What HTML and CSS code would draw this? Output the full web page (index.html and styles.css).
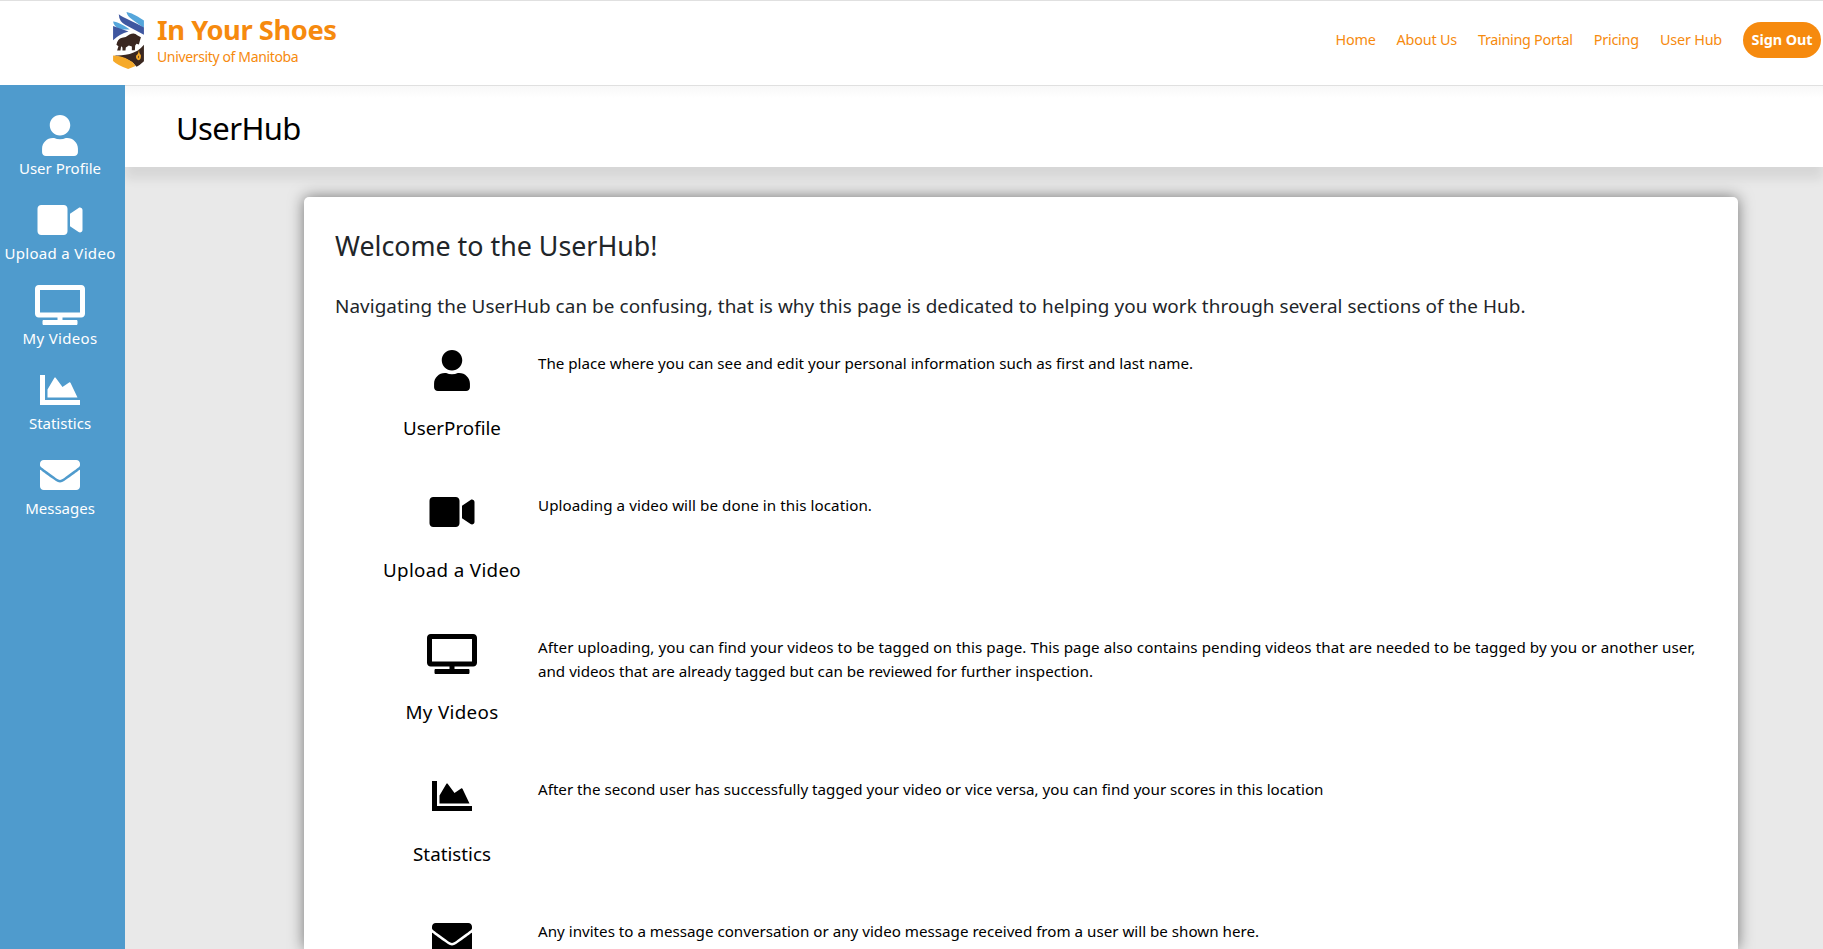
FILE: index.html
```html
<!DOCTYPE html>
<html lang="en">
<head>
<meta charset="utf-8">
<title>UserHub</title>
<link rel="stylesheet" href="styles.css">
</head>
<body>
<svg class="sprite" width="0" height="0">
  <symbol id="user" viewBox="0 0 448 512"><path d="M224 256c70.7 0 128-57.3 128-128S294.7 0 224 0 96 57.3 96 128s57.3 128 128 128zm89.6 32h-16.7c-22.2 10.2-46.9 16-72.9 16s-50.6-5.8-72.9-16h-16.7C60.2 288 0 348.2 0 422.4V464c0 26.5 21.5 48 48 48h352c26.5 0 48-21.5 48-48v-41.6c0-74.2-60.2-134.4-134.4-134.4z"/></symbol>
  <symbol id="video" viewBox="0 0 576 512"><path d="M336.2 64H47.8C21.4 64 0 85.4 0 111.8v288.4C0 426.6 21.4 448 47.8 448h288.4c26.4 0 47.8-21.4 47.8-47.8V111.8c0-26.4-21.4-47.8-47.8-47.8zm189.4 37.7L416 177.3v157.4l109.6 75.5c21.2 14.6 50.4-.3 50.4-25.8V127.5c0-25.4-29.1-40.4-50.4-25.8z"/></symbol>
  <symbol id="tv" viewBox="0 0 640 512"><path d="M592 0H48C21.5 0 0 21.5 0 48v320c0 26.5 21.5 48 48 48h240v32H112c-8.8 0-16 7.2-16 16v32c0 8.8 7.2 16 16 16h416c8.8 0 16-7.2 16-16v-32c0-8.8-7.2-16-16-16H352v-32h240c26.5 0 48-21.5 48-48V48c0-26.5-21.5-48-48-48zm-16 352H64V64h512v288z"/></symbol>
  <symbol id="chart" viewBox="0 0 512 512"><path d="M512 384v64H0V64h64v320h448zM372.7 159.5L288 216l-85.3-113.7c-5.1-6.8-15.5-6.3-19.9 1L96 248v104h384l-89.9-187.8c-3.2-6.5-11.4-8.7-17.4-4.7z"/></symbol>
  <symbol id="mail" viewBox="0 0 512 512"><path d="M502.3 190.8c3.9-3.1 9.7-.2 9.7 4.7V400c0 26.5-21.5 48-48 48H48c-26.5 0-48-21.5-48-48V195.6c0-5 5.7-7.8 9.7-4.7 22.4 17.4 52.1 39.5 154.1 113.6 21.1 15.4 56.7 47.8 92.2 47.6 35.7.3 72-32.8 92.3-47.6 102-74.1 131.6-96.3 154-113.7zM256 320c23.2.4 56.6-29.2 73.4-41.4 132.7-96.3 142.8-104.7 173.4-128.7 5.8-4.5 9.2-11.5 9.2-18.9v-19c0-26.5-21.5-48-48-48H48c-26.5 0-48 21.5-48 48v19c0 7.4 3.4 14.3 9.2 18.9 30.6 23.9 40.7 32.4 173.4 128.7 16.8 12.2 50.2 41.8 73.4 41.4z"/></symbol>
</svg>

<header class="topbar">
  <a class="brand">
    <svg class="logo" viewBox="0 0 92 170">
      <path fill="#55a6db" d="M40 0C55 3 65 8 92 25V48L57 22Q42 13 40 0ZM0 28C14 30 30 37 50 52L24 52Q2 45 0 28Z"/>
      <path fill="#3f57a0" d="M17 7C30 18 70 33 92 46V68L36 38Q18 29 17 7ZM0 42L46 58Q18 66 0 84Z"/>
      <path fill="#3a2720" d="M10 98Q13 80 27 77Q40 75 49 67Q64 61 72 69L83 75L80 86L77 97L70 95L66 100L65 114H56V103L47 100L38 106L37 115H28V106L24 102L22 115H12L16 102Z"/>
      <path fill="#3a2720" d="M3 130C30 130 70 128 92 98V147Q80 159 70 163Q52 139 3 130Z"/>
      <path fill="#f6aa2a" d="M0 130Q48 132 67 161L45 170Q12 158 0 146ZM77 111Q77 124 83 129Q84 143 76 144Q66 140 69 130Q77 124 77 111Z"/>
      <path fill="#3a2720" d="M75 139Q72 135 77 129Q78 137 75 139Z"/>
    </svg>
    <span class="brand-text">
      <span class="brand-name">In Your Shoes</span>
      <span class="brand-sub">University of Manitoba</span>
    </span>
  </a>
  <nav class="nav">
    <a>Home</a><a>About Us</a><a class="tight">Training Portal</a><a>Pricing</a><a>User Hub</a>
    <a class="signout">Sign Out</a>
  </nav>
</header>

<div class="shell">
  <aside class="sidebar">
    <a class="side-item"><svg class="icon w-user"><use href="#user"/></svg><span>User Profile</span></a>
    <a class="side-item"><svg class="icon w-video"><use href="#video"/></svg><span class="wide">Upload a Video</span></a>
    <a class="side-item"><svg class="icon w-tv"><use href="#tv"/></svg><span class="wide">My Videos</span></a>
    <a class="side-item"><svg class="icon w-sq"><use href="#chart"/></svg><span>Statistics</span></a>
    <a class="side-item"><svg class="icon w-sq"><use href="#mail"/></svg><span>Messages</span></a>
  </aside>
  <main class="main">
    <div class="titlebar"><h1>UserHub</h1></div>
    <section class="card">
      <h2>Welcome to the UserHub!</h2>
      <p class="lead">Navigating the UserHub can be confusing, that is why this page is dedicated to helping you work through several sections of the Hub.</p>
      <div class="row">
        <div class="topic"><svg class="icon w-user"><use href="#user"/></svg><span>UserProfile</span></div>
        <p class="desc">The place where you can see and edit your personal information such as first and last name.</p>
      </div>
      <div class="row">
        <div class="topic"><svg class="icon w-video"><use href="#video"/></svg><span class="wide">Upload a Video</span></div>
        <p class="desc loose">Uploading a video will be done in this location.</p>
      </div>
      <div class="row">
        <div class="topic"><svg class="icon w-tv"><use href="#tv"/></svg><span class="wide">My Videos</span></div>
        <p class="desc"><span class="loose">After uploading, you can find your videos to be tagged on this page. This page also contains pending videos that are needed to be tagged by you or another user,</span><br>and videos that are already tagged but can be reviewed for further inspection.</p>
      </div>
      <div class="row">
        <div class="topic"><svg class="icon w-sq"><use href="#chart"/></svg><span>Statistics</span></div>
        <p class="desc">After the second user has successfully tagged your video or vice versa, you can find your scores in this location</p>
      </div>
      <div class="row">
        <div class="topic"><svg class="icon w-sq"><use href="#mail"/></svg></div>
        <p class="desc">Any invites to a message conversation or any video message received from a user will be shown here.</p>
      </div>
    </section>
  </main>
</div>
</body>
</html>
```
FILE: styles.css
```css
* { box-sizing: border-box; }
html, body { height: 100%; }
body {
  margin: 0;
  overflow: hidden;
  display: flex;
  flex-direction: column;
  background: #e9e9e9;
  color: #212529;
  font-family: "Noto Sans", sans-serif;
  font-size: 15px;
  white-space: nowrap;
}
.sprite { position: absolute; }
h1, h2, p { margin: 0; font-weight: 400; }

.topbar {
  flex: none;
  height: 85px;
  display: flex;
  justify-content: space-between;
  align-items: flex-start;
  padding: 0 2px 0 113px;
  border-top: 1px solid #e0e0e0;
  background: #fff;
  color: #f68a0e;
}
.brand { display: flex; padding-top: 11px; }
.logo { width: 31px; height: 57px; }
.brand-text { display: flex; flex-direction: column; padding-left: 13px; }
.brand-name {
  font-size: 27.3px;
  line-height: 36px;
  font-weight: 700;
  letter-spacing: -0.43px;
}
.brand-sub { font-size: 14px; line-height: 18px; letter-spacing: -0.36px; }
.nav {
  display: flex;
  align-items: center;
  gap: 21px;
  padding-top: 21px;
  font-size: 14.4px;
  line-height: 36px;
  letter-spacing: -0.2px;
}
.nav .tight { letter-spacing: -0.3px; }
.nav .signout {
  width: 78px;
  height: 36px;
  border-radius: 18px;
  background: #f68a0e;
  color: #fff;
  font-weight: 700;
  letter-spacing: -0.08px;
  text-align: center;
}

.shell { flex: 1; min-height: 0; display: flex; }
.sidebar {
  flex: none;
  width: 125px;
  z-index: 1;
  padding: 30px 5px 0 0;
  background: #4f9bcd;
  color: #fff;
}
.side-item {
  height: 85px;
  display: flex;
  flex-direction: column;
  align-items: center;
  line-height: 27px;
}
.wide { letter-spacing: 0.33px; }
.icon { flex: none; height: 40px; fill: currentColor; }
.icon.w-user { width: 36px; height: 41px; margin-bottom: -1px; }
.w-video { width: 46px; }
.w-tv { width: 50px; }
.w-sq { width: 40px; }

.main { flex: 1; min-width: 0; display: flex; flex-direction: column; }
.titlebar {
  flex: none;
  height: 82px;
  padding-left: 51px;
  border-top: 1px solid #e0e0e0;
  background: linear-gradient(#f8f8f8, #fff 12px);
  box-shadow: 0 12px 10px rgba(0, 0, 0, 0.08);
  color: #000;
}
.titlebar h1 { font-size: 31px; line-height: 84px; letter-spacing: -0.6px; }
.card {
  flex: 1;
  min-height: 0;
  overflow: hidden;
  margin: 30px 85px 0 179px;
  padding: 30px 31px 0;
  border-radius: 5px 5px 0 0;
  background: #fff;
  box-shadow: 0 0 15px rgba(0, 0, 0, 0.5);
}
.card h2 { font-size: 26.8px; line-height: 38px; }
.lead {
  margin-top: 26px;
  font-size: 18.9px;
  line-height: 30px;
  letter-spacing: 0.065px;
}
.row { height: 142px; padding-left: 31px; display: flex; color: #000; }
.lead + .row { margin-top: 29px; }
.topic {
  width: 172px;
  display: flex;
  flex-direction: column;
  align-items: center;
  gap: 23px;
  font-size: 18.8px;
  line-height: 30px;
}
.desc { padding-top: 1px; font-size: 15.17px; line-height: 24px; }
.loose { letter-spacing: 0.07px; }
```
